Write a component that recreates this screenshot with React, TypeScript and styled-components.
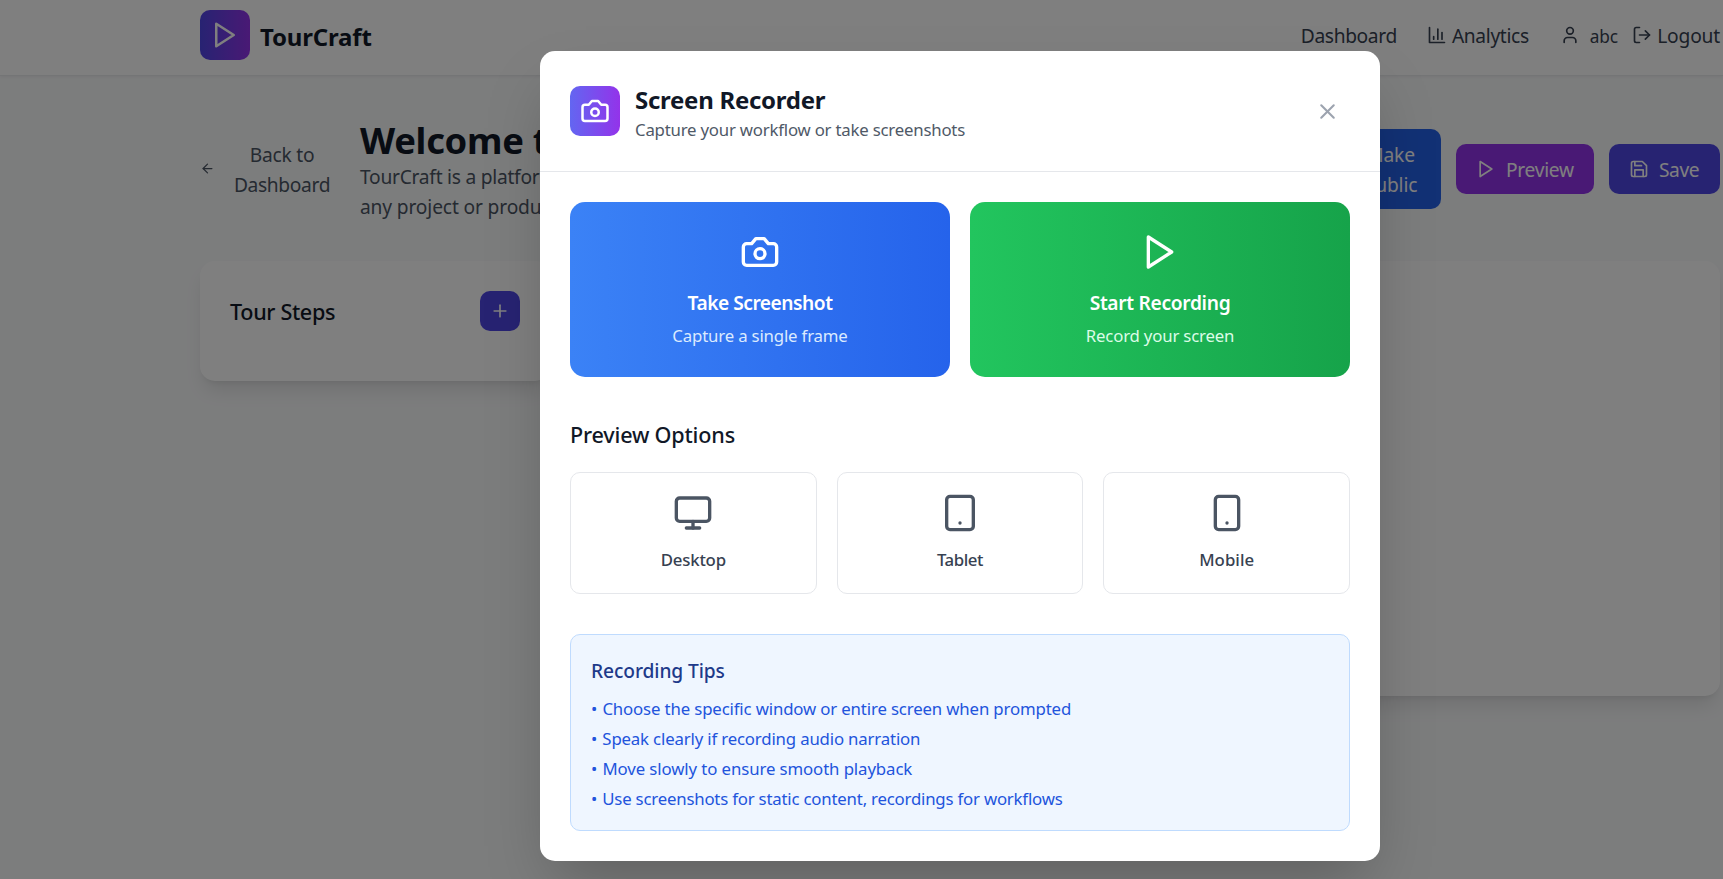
import React from 'react';
import styled, { createGlobalStyle, css } from 'styled-components';

const GlobalStyle = createGlobalStyle`
  *, *::before, *::after { box-sizing: border-box; }
  html, body { margin: 0; height: 100%; overflow: hidden; background: #f9fafb; }
  body { font-family: "Noto Sans", "Open Sans", sans-serif; font-size: 19.2px; line-height: 30px; }
  button { font: inherit; border: 0; background: none; padding: 0; color: inherit; cursor: pointer; }
  h1, h2, h3, h4, p, ul { margin: 0; padding: 0; font-weight: inherit; }
  ul { list-style: none; }
`;

/* Text metrics: size, line box, and how far the baseline sits below centre. */
const type = (size: number, line: number, drop = 1, weight = 400) => css`
  font-size: ${size * 0.96}px;
  line-height: ${line - drop * 2}px;
  padding-top: ${drop * 2}px;
  font-weight: ${weight};
  white-space: nowrap;
`;

type Track = { $track?: number };
const tracking = css<Track>`
  letter-spacing: ${({ $track = -0.012 }) => $track}em;
`;

/* ---------- icons ---------- */

const Svg = styled.svg<{ $size: number }>`
  display: block;
  flex: none;
  width: ${({ $size }) => $size}px;
  height: ${({ $size }) => $size}px;
  fill: none;
  stroke: currentColor;
  stroke-width: 2;
  stroke-linecap: round;
  stroke-linejoin: round;
`;

const shapes = {
  play: <polygon points="5 3 19 12 5 21 5 3" />,
  chart: (
    <>
      <path d="M3 3v18h18" />
      <path d="M18 17V9" />
      <path d="M13 17V5" />
      <path d="M8 17v-3" />
    </>
  ),
  user: (
    <>
      <path d="M19 21v-2a4 4 0 0 0-4-4H9a4 4 0 0 0-4 4v2" />
      <circle cx="12" cy="7" r="4" />
    </>
  ),
  logout: (
    <>
      <path d="M9 21H5a2 2 0 0 1-2-2V5a2 2 0 0 1 2-2h4" />
      <polyline points="16 17 21 12 16 7" />
      <line x1="21" x2="9" y1="12" y2="12" />
    </>
  ),
  back: (
    <>
      <path d="m12 19-7-7 7-7" />
      <path d="M19 12H5" />
    </>
  ),
  save: (
    <>
      <path d="M19 21H5a2 2 0 0 1-2-2V5a2 2 0 0 1 2-2h11l5 5v11a2 2 0 0 1-2 2z" />
      <polyline points="17 21 17 13 7 13 7 21" />
      <polyline points="7 3 7 8 15 8" />
    </>
  ),
  plus: (
    <>
      <path d="M5 12h14" />
      <path d="M12 5v14" />
    </>
  ),
  close: (
    <>
      <path d="M18 6 6 18" />
      <path d="m6 6 12 12" />
    </>
  ),
  camera: (
    <>
      <path d="M14.5 4h-5L7 7H4a2 2 0 0 0-2 2v9a2 2 0 0 0 2 2h16a2 2 0 0 0 2-2V9a2 2 0 0 0-2-2h-3l-2.5-3z" />
      <circle cx="12" cy="13" r="3" />
    </>
  ),
  desktop: (
    <>
      <rect width="20" height="14" x="2" y="3" rx="2" />
      <line x1="8" x2="16" y1="21" y2="21" />
      <line x1="12" x2="12" y1="17" y2="21" />
    </>
  ),
  tablet: (
    <>
      <rect width="16" height="20" x="4" y="2" rx="2" ry="2" />
      <line x1="12" x2="12.01" y1="18" y2="18" />
    </>
  ),
  mobile: (
    <>
      <rect width="14" height="20" x="5" y="2" rx="2" ry="2" />
      <path d="M12 18h.01" />
    </>
  ),
};

const Icon = ({ name, size = 20 }: { name: keyof typeof shapes; size?: number }) => (
  <Svg $size={size} viewBox="0 0 24 24" aria-hidden>
    {shapes[name]}
  </Svg>
);

/* ---------- page ---------- */

const Page = styled.div`
  position: relative;
  height: 100vh;
  overflow: hidden;
  background: #f9fafb;
`;

const TopBar = styled.header`
  display: flex;
  justify-content: space-between;
  align-items: center;
  height: 76px;
  padding: 10px 3px 15px 200px;
  background: #fff;
  border-bottom: 1px solid #e9eaec;
  box-shadow: 0 1px 3px rgba(0, 0, 0, 0.06);
`;

const Brand = styled.div`
  display: flex;
  align-items: center;
  gap: 10px;
`;

const GradientTile = styled.div<{ $from: string }>`
  display: grid;
  place-items: center;
  flex: none;
  width: 50px;
  height: 50px;
  border-radius: 10px;
  color: #fff;
  background: linear-gradient(to right, ${({ $from }) => $from}, #9333ea);
`;

const BrandName = styled.span<Track>`
  ${type(25, 35, 1.5, 700)}
  ${tracking}
  color: #111827;
`;

const Nav = styled.nav`
  display: flex;
  align-items: center;
  color: #374151;
`;

const NavItem = styled.a<{ $gap?: number; $after: number }>`
  display: flex;
  align-items: center;
  gap: ${({ $gap = 5 }) => $gap}px;
  margin-right: ${({ $after }) => $after}px;
`;

const NavText = styled.span<Track>`
  ${type(20, 30, 1)}
  ${tracking}
`;

const UserName = styled.span<Track>`
  ${type(18, 25, 1)}
  ${tracking}
`;

const Content = styled.main`
  padding: 40px 3px 40px 200px;
`;

const TitleRow = styled.div`
  display: flex;
  align-items: center;
  height: 105px;
  margin-bottom: 40px;
`;

const BackLink = styled.button`
  display: flex;
  align-items: center;
  gap: 9px;
  width: 160px;
  color: #4b5563;
`;

const BackLabel = styled.span`
  display: flex;
  flex-direction: column;
  align-items: center;
  width: 116px;
`;

const Line = styled.span<Track>`
  ${type(20, 30, 1)}
  ${tracking}
`;

const TourInfo = styled.div`
  display: flex;
  flex-direction: column;
  width: 740px;
  color: #4b5563;
`;

const TourTitle = styled.h1<Track>`
  ${type(37.9, 45, 1.5, 700)}
  ${tracking}
  color: #111827;
`;

const Actions = styled.div`
  display: flex;
  align-items: center;
  justify-content: flex-end;
  flex: 1;
  gap: 15px;
`;

const ActionButton = styled.button<{ $bg: string; $width: number; $height?: number }>`
  display: flex;
  align-items: center;
  gap: 10px;
  width: ${({ $width }) => $width}px;
  height: ${({ $height = 50 }) => $height}px;
  padding: 0 20px;
  border-radius: 10px;
  color: #fff;
  background: ${({ $bg }) => $bg};
`;

const StackedLabel = styled.span`
  display: flex;
  flex-direction: column;
  align-items: center;
  margin-left: auto;
  width: 61px;
`;

const Panels = styled.div`
  display: grid;
  grid-template-columns: 350px 1fr;
  gap: 40px;
  align-items: start;
`;

const Panel = styled.section<{ $height: number }>`
  height: ${({ $height }) => $height}px;
  padding: 30px;
  border-radius: 15px;
  background: #fff;
  box-shadow: 0 12.5px 19px -4px rgba(0, 0, 0, 0.1), 0 5px 7.5px -5px rgba(0, 0, 0, 0.1);
`;

const PanelHeader = styled.div`
  display: flex;
  align-items: center;
  justify-content: space-between;
`;

const SectionTitle = styled.h3<Track>`
  ${type(22.5, 35, 0, 550)}
  ${tracking}
  color: #111827;
`;

const AddButton = styled.button`
  display: grid;
  place-items: center;
  width: 40px;
  height: 40px;
  border-radius: 10px;
  color: #fff;
  background: #4f46e5;
`;

/* ---------- dialog ---------- */

const Overlay = styled.div`
  position: absolute;
  inset: 0;
  display: flex;
  align-items: flex-start;
  padding: 51px 0 0 540px;
  background: rgba(0, 0, 0, 0.5);
`;

const Dialog = styled.div`
  width: 840px;
  border-radius: 15px;
  background: #fff;
  box-shadow: 0 31px 62px -15px rgba(0, 0, 0, 0.25);
`;

const DialogHeader = styled.div`
  display: flex;
  align-items: center;
  gap: 15px;
  padding: 30px;
  border-bottom: 1px solid #e5e7eb;
`;

const DialogHeading = styled.div`
  flex: 1;
`;

const DialogTitle = styled.h2<Track>`
  ${type(25, 35, 1, 700)}
  ${tracking}
  color: #111827;
`;

const DialogSubtitle = styled.p<Track>`
  ${type(17.5, 25, 1)}
  ${tracking}
  color: #4f5967;
`;

const CloseButton = styled.button`
  padding: 10px;
  color: #9ca3af;
`;

const DialogBody = styled.div`
  padding: 30px;
`;

const CaptureGrid = styled.div`
  display: grid;
  grid-template-columns: 1fr 1fr;
  gap: 20px;
  margin-bottom: 40px;
`;

const CaptureButton = styled.button<{ $from: string; $to: string }>`
  display: flex;
  flex-direction: column;
  align-items: center;
  height: 175px;
  padding: 30px;
  border-radius: 15px;
  color: #fff;
  background: linear-gradient(to right, ${({ $from }) => $from}, ${({ $to }) => $to});
`;

const CaptureTitle = styled.span<Track>`
  ${type(20, 30, 1, 600)}
  ${tracking}
  margin: 15px 0 5px;
`;

const CaptureNote = styled.span<Track & { $color: string }>`
  ${type(17.5, 25, 1)}
  ${tracking}
  color: ${({ $color }) => $color};
`;

const DeviceGrid = styled.div`
  display: grid;
  grid-template-columns: repeat(3, 1fr);
  gap: 20px;
  margin: 20px 0 40px;
`;

const DeviceCard = styled.button`
  display: flex;
  flex-direction: column;
  align-items: center;
  gap: 10px;
  padding: 20px;
  border: 1px solid #e5e7eb;
  border-radius: 10px;
  color: #4b5563;
`;

const DeviceName = styled.span<Track>`
  ${type(17.5, 30, 1.5, 550)}
  ${tracking}
  color: #374151;
`;

const Tips = styled.div`
  padding: 20px;
  border: 1px solid #bfdbfe;
  border-radius: 10px;
  background: #eff6ff;
`;

const TipsTitle = styled.h4<Track>`
  ${type(20, 30, 1, 550)}
  ${tracking}
  margin-bottom: 10px;
  color: #1e3a8a;
`;

const TipList = styled.ul`
  display: grid;
  gap: 5px;
  color: #2254dc;
`;

const Tip = styled.li<Track>`
  ${type(17.5, 25, 1)}
  ${tracking}
`;

const Bullet = styled.span`
  margin-right: 1px;
`;

const tips: [string, number][] = [
  ['Choose the specific window or entire screen when prompted', -0.0085],
  ['Speak clearly if recording audio narration', -0.0098],
  ['Move slowly to ensure smooth playback', -0.006],
  ['Use screenshots for static content, recordings for workflows', -0.012],
];

const devices: ['desktop' | 'tablet' | 'mobile', string, number][] = [
  ['desktop', 'Desktop', -0.012],
  ['tablet', 'Tablet', -0.026],
  ['mobile', 'Mobile', 0.003],
];

export default function App() {
  return (
    <>
      <GlobalStyle />
      <Page>
        <TopBar>
          <Brand>
            <GradientTile $from="#4f46e5">
              <Icon name="play" size={30} />
            </GradientTile>
            <BrandName $track={-0.0075}>TourCraft</BrandName>
          </Brand>
          <Nav>
            <NavItem $after={30}>
              <NavText $track={-0.0184}>Dashboard</NavText>
            </NavItem>
            <NavItem $after={31}>
              <Icon name="chart" />
              <NavText $track={-0.0176}>Analytics</NavText>
            </NavItem>
            <NavItem $gap={10} $after={14.5}>
              <Icon name="user" />
              <UserName>abc</UserName>
            </NavItem>
            <NavItem $after={0}>
              <Icon name="logout" />
              <NavText $track={-0.0097}>Logout</NavText>
            </NavItem>
          </Nav>
        </TopBar>

        <Content>
          <TitleRow>
            <BackLink>
              <Icon name="back" size={15} />
              <BackLabel>
                <Line $track={-0.0113}>Back to</Line>
                <Line $track={-0.0184}>Dashboard</Line>
              </BackLabel>
            </BackLink>
            <TourInfo>
              <TourTitle $track={-0.008}>Welcome to</TourTitle>
              <Line $track={-0.0135}>TourCraft is a platform</Line>
              <Line $track={-0.0075}>any project or product</Line>
            </TourInfo>
            <Actions>
              <ActionButton $bg="#2563eb" $width={128} $height={80}>
                <StackedLabel>
                  <Line $track={-0.0072}>Make</Line>
                  <Line $track={-0.0072}>Public</Line>
                </StackedLabel>
              </ActionButton>
              <ActionButton $bg="#9333ea" $width={138}>
                <Icon name="play" />
                <Line $track={-0.0149}>Preview</Line>
              </ActionButton>
              <ActionButton $bg="#4f46e5" $width={111}>
                <Icon name="save" />
                <Line $track={-0.0234}>Save</Line>
              </ActionButton>
            </Actions>
          </TitleRow>

          <Panels>
            <Panel $height={120}>
              <PanelHeader>
                <SectionTitle $track={-0.016}>Tour Steps</SectionTitle>
                <AddButton aria-label="Add step">
                  <Icon name="plus" />
                </AddButton>
              </PanelHeader>
            </Panel>
            <Panel $height={435} />
          </Panels>
        </Content>

        <Overlay>
          <Dialog role="dialog">
            <DialogHeader>
              <GradientTile $from="#6366f1">
                <Icon name="camera" size={30} />
              </GradientTile>
              <DialogHeading>
                <DialogTitle $track={-0.0115}>Screen Recorder</DialogTitle>
                <DialogSubtitle $track={-0.0125}>Capture your workflow or take screenshots</DialogSubtitle>
              </DialogHeading>
              <CloseButton aria-label="Close">
                <Icon name="close" size={25} />
              </CloseButton>
            </DialogHeader>

            <DialogBody>
              <CaptureGrid>
                <CaptureButton $from="#3b82f6" $to="#2563eb">
                  <Icon name="camera" size={40} />
                  <CaptureTitle $track={-0.0252}>Take Screenshot</CaptureTitle>
                  <CaptureNote $track={-0.0104} $color="#dbeafe">Capture a single frame</CaptureNote>
                </CaptureButton>
                <CaptureButton $from="#22c55e" $to="#16a34a">
                  <Icon name="play" size={40} />
                  <CaptureTitle $track={-0.0161}>Start Recording</CaptureTitle>
                  <CaptureNote $track={-0.0108} $color="#dcfce7">Record your screen</CaptureNote>
                </CaptureButton>
              </CaptureGrid>

              <SectionTitle $track={-0.0085}>Preview Options</SectionTitle>
              <DeviceGrid>
                {devices.map(([icon, label, track]) => (
                  <DeviceCard key={icon}>
                    <Icon name={icon} size={40} />
                    <DeviceName $track={track}>{label}</DeviceName>
                  </DeviceCard>
                ))}
              </DeviceGrid>

              <Tips>
                <TipsTitle $track={-0.005}>Recording Tips</TipsTitle>
                <TipList>
                  {tips.map(([tip, track]) => (
                    <Tip key={tip} $track={track}>
                      <Bullet>•</Bullet> {tip}
                    </Tip>
                  ))}
                </TipList>
              </Tips>
            </DialogBody>
          </Dialog>
        </Overlay>
      </Page>
    </>
  );
}
